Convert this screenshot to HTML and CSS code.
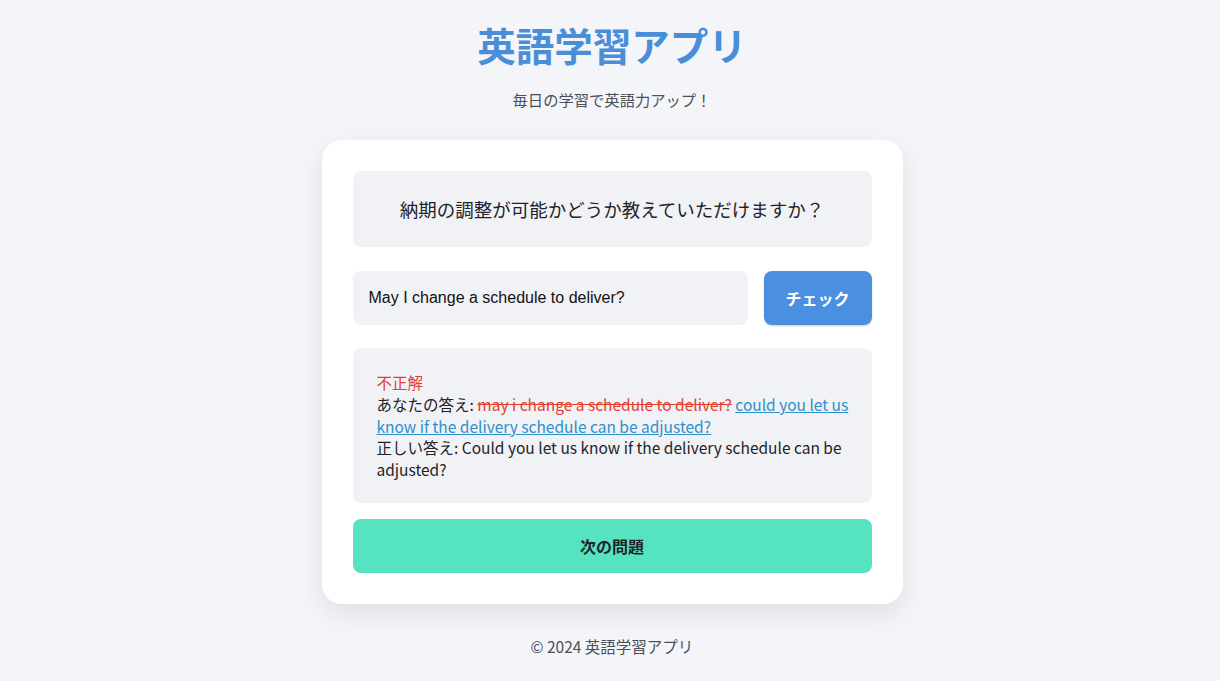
FILE: index.html
```html
<!DOCTYPE html>
<html lang="ja">
<head>
    <meta charset="UTF-8">
    <meta name="viewport" content="width=device-width, initial-scale=1.0">
    <title>英語学習アプリ</title>
    <link rel="stylesheet" href="styles.css">
</head>
<body>
    <header class="header">
        <h1 class="title">英語学習アプリ</h1>
        <p class="subtitle">毎日の学習で英語力アップ！</p>
    </header>

    <main class="card">
        <div class="question">納期の調整が可能かどうか教えていただけますか？</div>

        <div class="answer-row">
            <input type="text" class="answer-input" value="May I change a schedule to deliver?">
            <button class="check-btn">チェック</button>
        </div>

        <div class="result">
            <div class="result-label">不正解</div>
            <div>あなたの答え: <span class="wrong">may i change a schedule to deliver?</span> <span class="right">could you let us know if the delivery schedule can be adjusted?</span></div>
            <div>正しい答え: Could you let us know if the delivery schedule can be adjusted?</div>
        </div>

        <button class="next-btn">次の問題</button>
    </main>

    <footer class="footer">© 2024 英語学習アプリ</footer>
</body>
</html>
```

FILE: styles.css
```css
body {
    font-family: "Noto Sans CJK JP", "Noto Sans", sans-serif;
    background-color: #f4f5f8;
    color: #1f2328;
    margin: 0;
    padding: 0 0 0 4px;
    display: flex;
    flex-direction: column;
    align-items: center;
}
.header {
    text-align: center;
    padding-top: 20px;
}
.title {
    margin: 0;
    font-size: 38.5px;
    line-height: 48px;
    font-weight: 700;
    color: #4a8ed9;
}
.subtitle {
    margin: 19px 0 0;
    font-size: 15.3px;
    line-height: 24px;
    color: #4b5058;
}
.card {
    margin-top: 29px;
    width: 519px;
    padding: 31px;
    background-color: #fff;
    border-radius: 20px;
    box-shadow: 0 10px 28px rgba(0, 0, 0, 0.09);
    display: flex;
    flex-direction: column;
}
.question {
    height: 76px;
    background-color: #f1f2f5;
    border-radius: 8px;
    display: flex;
    align-items: center;
    justify-content: center;
    font-size: 18.5px;
    color: #1f2328;
}
.answer-row {
    display: flex;
    gap: 16px;
    margin-top: 24px;
}
.answer-input {
    flex: 1;
    height: 54px;
    box-sizing: border-box;
    border: none;
    border-radius: 8px;
    background-color: #f1f2f5;
    padding: 0 16px;
    font-family: "Liberation Sans", Arial, sans-serif;
    font-size: 16px;
    color: #111;
}
.check-btn {
    width: 108px;
    height: 54px;
    border: none;
    border-radius: 8px;
    background-color: #4a8fe0;
    box-shadow: 0 1px 2px rgba(0, 0, 0, 0.2);
    color: #fff;
    font-family: "Noto Sans CJK JP", sans-serif;
    font-size: 16px;
    font-weight: 700;
    cursor: pointer;
}
.result {
    margin-top: 23px;
    background-color: #f1f2f5;
    border-radius: 8px;
    padding: 24px 20px 22px 24px;
    font-size: 15.5px;
    line-height: 21.8px;
    color: #1f2328;
}
.result-label {
    color: #e2412f;
}
.wrong {
    color: #e2412f;
    text-decoration: line-through;
}
.right {
    color: #2e8fcb;
    text-decoration: underline;
}
.next-btn {
    margin-top: 16px;
    height: 54px;
    border: none;
    border-radius: 8px;
    background-color: #55e3c2;
    color: #1f2328;
    font-family: "Noto Sans CJK JP", sans-serif;
    font-size: 16px;
    font-weight: 700;
    cursor: pointer;
}
.footer {
    margin-top: 30px;
    font-size: 15.5px;
    line-height: 24px;
    color: #4b5058;
}
```
